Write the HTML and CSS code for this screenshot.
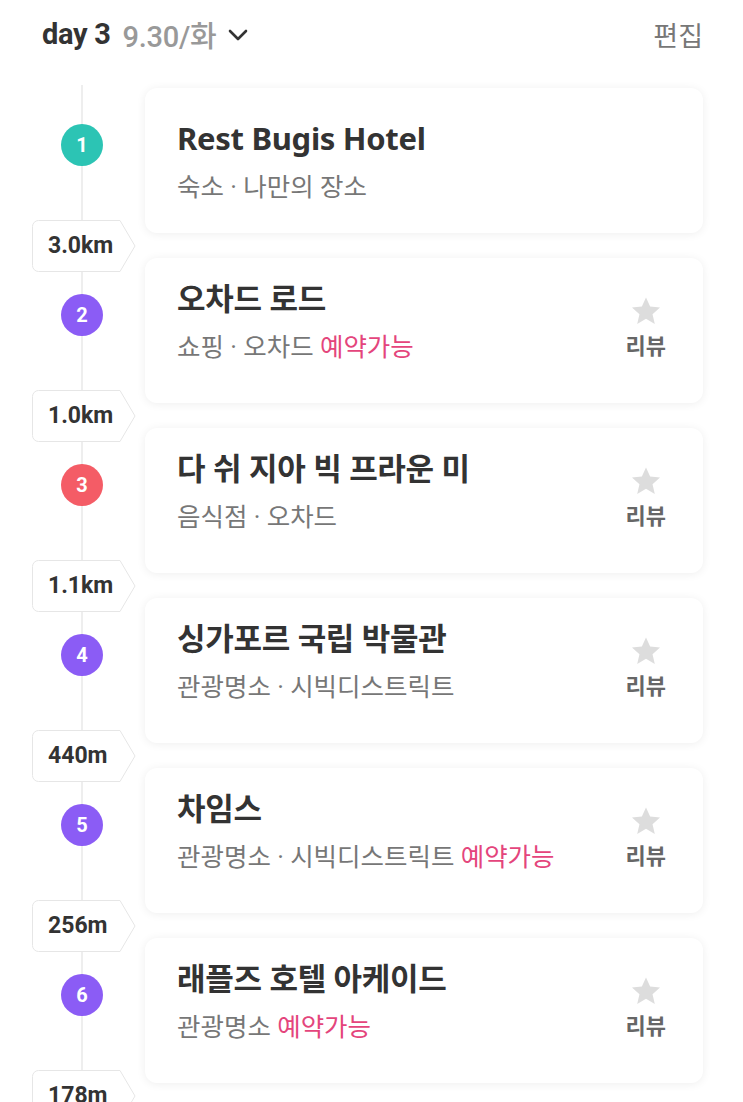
FILE: index.html
```html
<!DOCTYPE html>
<html lang="ko">
<head>
    <meta charset="UTF-8">
    <meta name="viewport" content="width=device-width, initial-scale=1.0">
    <title>일정</title>
    <link rel="stylesheet" href="styles.css">
</head>
<body>
    <header class="day-header">
        <div class="day-title">
            <span class="day-num">day 3</span>
            <span class="day-date">9.30/화</span>
            <svg class="chevron" width="20" height="12" viewBox="0 0 20 12"><polyline points="2,2 10,10 18,2" fill="none" stroke="#333" stroke-width="2.6" stroke-linecap="round" stroke-linejoin="round"/></svg>
        </div>
        <button class="edit">편집</button>
    </header>

    <div class="timeline">
        <div class="stop">
            <div class="stop-mark"><span class="num teal">1</span></div>
            <div class="card card-center">
                <div class="info">
                    <div class="title">Rest Bugis Hotel</div>
                    <div class="meta">숙소 · 나만의 장소</div>
                </div>
            </div>
        </div>
        <div class="leg"><span class="tag"><svg class="tag-bg" viewBox="0 0 104 52"><path d="M6.5 0.5 H88 L103 26 L88 51.5 H6.5 A6 6 0 0 1 0.5 45.5 V6.5 A6 6 0 0 1 6.5 0.5 Z" fill="#fff" stroke="#e6e6e6"/></svg><b>3.0km</b></span></div>

        <div class="stop">
            <div class="stop-mark"><span class="num purple">2</span></div>
            <div class="card">
                <div class="info">
                    <div class="title">오차드 로드</div>
                    <div class="meta">쇼핑 · 오차드 <em>예약가능</em></div>
                </div>
                <div class="review">
                    <svg class="star" width="32" height="32" viewBox="0 0 24 24"><path d="M12 1.8l3.1 6.9 7.4.7-5.6 5 1.7 7.3L12 17.9l-6.6 3.8 1.7-7.3-5.6-5 7.4-.7z" fill="#ddd"/></svg>
                    <span>리뷰</span>
                </div>
            </div>
        </div>
        <div class="leg"><span class="tag"><svg class="tag-bg" viewBox="0 0 104 52"><path d="M6.5 0.5 H88 L103 26 L88 51.5 H6.5 A6 6 0 0 1 0.5 45.5 V6.5 A6 6 0 0 1 6.5 0.5 Z" fill="#fff" stroke="#e6e6e6"/></svg><b>1.0km</b></span></div>

        <div class="stop">
            <div class="stop-mark"><span class="num red">3</span></div>
            <div class="card">
                <div class="info">
                    <div class="title">다 쉬 지아 빅 프라운 미</div>
                    <div class="meta">음식점 · 오차드</div>
                </div>
                <div class="review">
                    <svg class="star" width="32" height="32" viewBox="0 0 24 24"><path d="M12 1.8l3.1 6.9 7.4.7-5.6 5 1.7 7.3L12 17.9l-6.6 3.8 1.7-7.3-5.6-5 7.4-.7z" fill="#ddd"/></svg>
                    <span>리뷰</span>
                </div>
            </div>
        </div>
        <div class="leg"><span class="tag"><svg class="tag-bg" viewBox="0 0 104 52"><path d="M6.5 0.5 H88 L103 26 L88 51.5 H6.5 A6 6 0 0 1 0.5 45.5 V6.5 A6 6 0 0 1 6.5 0.5 Z" fill="#fff" stroke="#e6e6e6"/></svg><b>1.1km</b></span></div>

        <div class="stop">
            <div class="stop-mark"><span class="num purple">4</span></div>
            <div class="card">
                <div class="info">
                    <div class="title">싱가포르 국립 박물관</div>
                    <div class="meta">관광명소 · 시빅디스트릭트</div>
                </div>
                <div class="review">
                    <svg class="star" width="32" height="32" viewBox="0 0 24 24"><path d="M12 1.8l3.1 6.9 7.4.7-5.6 5 1.7 7.3L12 17.9l-6.6 3.8 1.7-7.3-5.6-5 7.4-.7z" fill="#ddd"/></svg>
                    <span>리뷰</span>
                </div>
            </div>
        </div>
        <div class="leg"><span class="tag"><svg class="tag-bg" viewBox="0 0 104 52"><path d="M6.5 0.5 H88 L103 26 L88 51.5 H6.5 A6 6 0 0 1 0.5 45.5 V6.5 A6 6 0 0 1 6.5 0.5 Z" fill="#fff" stroke="#e6e6e6"/></svg><b>440m</b></span></div>

        <div class="stop">
            <div class="stop-mark"><span class="num purple">5</span></div>
            <div class="card">
                <div class="info">
                    <div class="title">차임스</div>
                    <div class="meta">관광명소 · 시빅디스트릭트 <em>예약가능</em></div>
                </div>
                <div class="review">
                    <svg class="star" width="32" height="32" viewBox="0 0 24 24"><path d="M12 1.8l3.1 6.9 7.4.7-5.6 5 1.7 7.3L12 17.9l-6.6 3.8 1.7-7.3-5.6-5 7.4-.7z" fill="#ddd"/></svg>
                    <span>리뷰</span>
                </div>
            </div>
        </div>
        <div class="leg"><span class="tag"><svg class="tag-bg" viewBox="0 0 104 52"><path d="M6.5 0.5 H88 L103 26 L88 51.5 H6.5 A6 6 0 0 1 0.5 45.5 V6.5 A6 6 0 0 1 6.5 0.5 Z" fill="#fff" stroke="#e6e6e6"/></svg><b>256m</b></span></div>

        <div class="stop">
            <div class="stop-mark"><span class="num purple">6</span></div>
            <div class="card">
                <div class="info">
                    <div class="title">래플즈 호텔 아케이드</div>
                    <div class="meta">관광명소 <em>예약가능</em></div>
                </div>
                <div class="review">
                    <svg class="star" width="32" height="32" viewBox="0 0 24 24"><path d="M12 1.8l3.1 6.9 7.4.7-5.6 5 1.7 7.3L12 17.9l-6.6 3.8 1.7-7.3-5.6-5 7.4-.7z" fill="#ddd"/></svg>
                    <span>리뷰</span>
                </div>
            </div>
        </div>
        <div class="leg"><span class="tag"><svg class="tag-bg" viewBox="0 0 104 52"><path d="M6.5 0.5 H88 L103 26 L88 51.5 H6.5 A6 6 0 0 1 0.5 45.5 V6.5 A6 6 0 0 1 6.5 0.5 Z" fill="#fff" stroke="#e6e6e6"/></svg><b>178m</b></span></div>

        <div class="stop">
            <div class="stop-mark"><span class="num purple">7</span></div>
            <div class="card"></div>
        </div>
    </div>
</body>
</html>
```

FILE: styles.css
```css
body {
    margin: 0;
    background: #fff;
    font-family: Roboto, "Noto Sans CJK KR", sans-serif;
    color: #333;
    overflow: hidden;
}

.day-header {
    height: 68px;
    display: flex;
    align-items: center;
    justify-content: space-between;
    padding: 0 40px 0 42px;
}

.day-title {
    display: flex;
    align-items: center;
}

.day-num {
    font-size: 29px;
    font-weight: 700;
    color: #333;
    letter-spacing: -0.3px;
}

.day-date {
    font-size: 29px;
    font-weight: 500;
    color: #999;
    margin-left: 12px;
    letter-spacing: -0.3px;
}

.chevron {
    margin-left: 12px;
    margin-top: 2px;
}

.edit {
    border: none;
    background: none;
    padding: 0;
    font-family: inherit;
    font-size: 27px;
    color: #777;
}

.timeline {
    margin-top: 17px;
    padding: 3px 40px 0 0;
    background: linear-gradient(#eee, #eee) 81px 0 / 2px 100% no-repeat;
}

.stop {
    display: flex;
}

.stop-mark {
    width: 145px;
    flex: none;
    padding: 36px 0 0 61px;
    box-sizing: border-box;
}

.num {
    display: flex;
    align-items: center;
    justify-content: center;
    width: 42px;
    height: 42px;
    border-radius: 50%;
    color: #fff;
    font-size: 20px;
    font-weight: 700;
}

.teal { background: #2cc4b4; }
.purple { background: #8b5cf5; }
.red { background: #f45c66; }

.card {
    width: 558px;
    height: 145px;
    box-sizing: border-box;
    background: #fff;
    border-radius: 12px;
    box-shadow: 0 1px 10px rgba(0, 0, 0, 0.07);
    padding: 21px 37px 0 32px;
    display: flex;
    justify-content: space-between;
}

.card-center {
    padding-top: 0;
    align-items: center;
}

.title {
    font-family: "Noto Sans", "Noto Sans CJK KR", sans-serif;
    font-size: 31px;
    line-height: 38px;
    font-weight: 700;
    color: #333;
    letter-spacing: -0.3px;
}

.meta {
    margin-top: 14px;
    font-size: 25.5px;
    line-height: 32px;
    color: #777;
}

.meta em {
    font-style: normal;
    color: #e4457c;
}

.review {
    flex: none;
    display: flex;
    flex-direction: column;
    align-items: center;
    white-space: nowrap;
}

.star {
    margin-top: 16px;
}

.review span {
    margin-top: 5px;
    font-size: 22px;
    line-height: 30px;
    font-weight: 700;
    color: #666;
}

.leg {
    height: 25px;
    display: flex;
    align-items: center;
    padding-left: 32px;
}

.tag {
    position: relative;
    width: 104px;
    height: 52px;
    flex: none;
    display: flex;
    align-items: center;
    padding-left: 16px;
    box-sizing: border-box;
    z-index: 1;
}

.tag-bg {
    position: absolute;
    left: 0;
    top: 0;
    width: 104px;
    height: 52px;
}

.tag b {
    position: relative;
    font-size: 23px;
    font-weight: 700;
    color: #333;
}
```
